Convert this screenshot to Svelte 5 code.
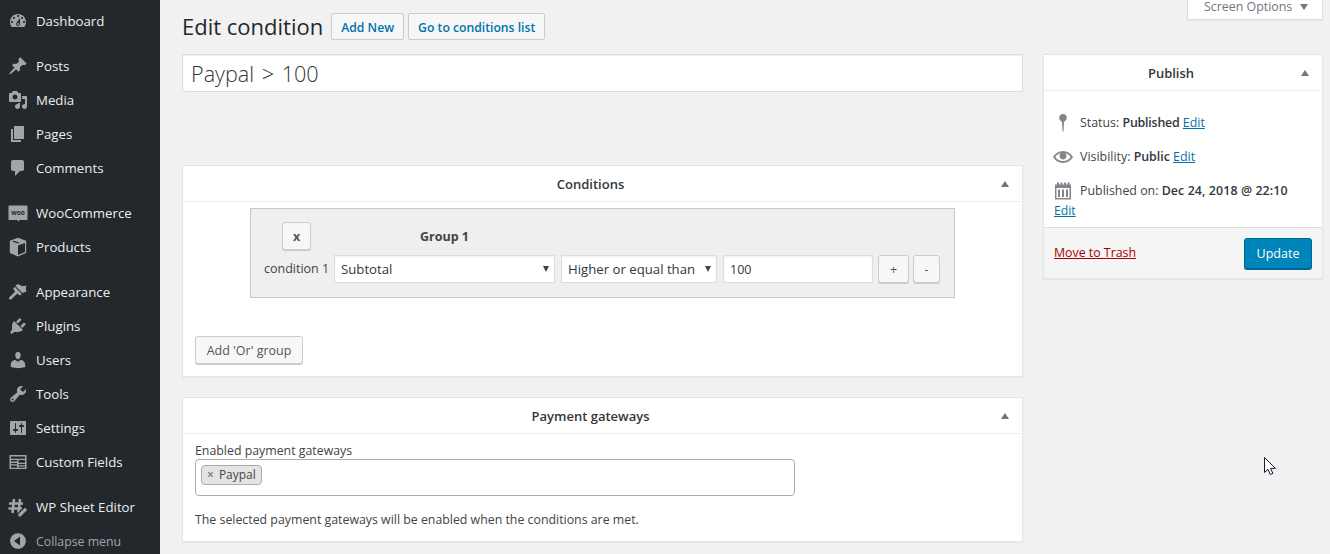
<script>
  const menu = [
    { group: [{ id: 'dashboard', label: 'Dashboard' }] },
    { group: [{ id: 'post', label: 'Posts' }, { id: 'media', label: 'Media' }, { id: 'page', label: 'Pages' }, { id: 'comments', label: 'Comments' }] },
    { group: [{ id: 'woo', label: 'WooCommerce' }, { id: 'products', label: 'Products' }] },
    { group: [{ id: 'appearance', label: 'Appearance' }, { id: 'plugins', label: 'Plugins' }, { id: 'users', label: 'Users' }, { id: 'tools', label: 'Tools' }, { id: 'settings', label: 'Settings' }, { id: 'fields', label: 'Custom Fields' }] },
    { group: [{ id: 'sheet', label: 'WP Sheet Editor' }, { id: 'collapse', label: 'Collapse menu' }] }
  ];
  const paths = {
    dashboard: 'M3.76 16h12.48c1.1-1.37 1.76-3.11 1.76-5 0-4.42-3.58-8-8-8s-8 3.58-8 8c0 1.89.66 3.63 1.76 5zM10 4c.55 0 1 .45 1 1s-.45 1-1 1-1-.45-1-1 .45-1 1-1zM6 6c.55 0 1 .45 1 1s-.45 1-1 1-1-.45-1-1 .45-1 1-1zm8 0c.55 0 1 .45 1 1s-.45 1-1 1-1-.45-1-1 .45-1 1-1zm-5.37 5.55L12 7v6c0 1.1-.9 2-2 2s-2-.9-2-2c0-.57.24-1.08.63-1.45zM4 10c.55 0 1 .45 1 1s-.45 1-1 1-1-.45-1-1 .45-1 1-1zm12 0c.55 0 1 .45 1 1s-.45 1-1 1-1-.45-1-1 .45-1 1-1zm-5 3c0-.55-.45-1-1-1s-1 .45-1 1 .45 1 1 1 1-.45 1-1z',
    post: 'M10.44 3.02l1.82-1.82 6.36 6.35-1.83 1.82c-1.05-.68-2.48-.57-3.41.36l-.75.75c-.92.93-1.04 2.35-.35 3.41l-1.83 1.82-2.41-2.41-2.8 2.79c-.42.42-3.38 2.71-3.8 2.29s1.86-3.39 2.28-3.81l2.79-2.79L4.1 9.36l1.83-1.82c1.05.69 2.48.57 3.4-.36l.75-.75c.93-.92 1.05-2.35.36-3.41z',
    media: 'M13 11V4c0-.55-.45-1-1-1h-1.67L9 1H5L3.67 3H2c-.55 0-1 .45-1 1v7c0 .55.45 1 1 1h10c.55 0 1-.45 1-1zM7 4.5c1.38 0 2.5 1.12 2.5 2.5S8.38 9.5 7 9.5 4.5 8.38 4.5 7 5.62 4.5 7 4.5zM14 6h5v10.5c0 1.38-1.12 2.5-2.5 2.5S14 17.88 14 16.5s1.12-2.5 2.5-2.5c.17 0 .34.02.5.05V9h-3V6zm-4 8.05V13h2v3.5c0 1.38-1.12 2.5-2.5 2.5S7 17.88 7 16.5 8.12 14 9.5 14c.17 0 .34.02.5.05z',
    page: 'M6 15V2h10v13H6zm-1 1h8v2H3V5h2v11z',
    comments: 'M5 2h9c1.1 0 2 .9 2 2v7c0 1.1-.9 2-2 2h-2l-5 5v-5H5c-1.1 0-2-.9-2-2V4c0-1.1.9-2 2-2z',
    products: 'M10 .8l8.200 3v12.200L10 19.400 1.800 16V3.800L10 .8zM10 8.600V18l7-2.900V6.100l-7 2.500zM4.200 4.400l5.800 2.200 1.900-.7L6 3.700 4.200 4.400z',
    appearance: 'M14.480 11.060L7.410 3.990l1.500-1.500c.5-.56 2.300-.47 3.590.82 1 1 1.800.9 2.700.8.900-.1 1.800-.3 3.300-.6-.3 1.500-.5 2.400-.6 3.300-.1.9-.2 1.700.8 2.700-.500.2-1 .4-1.500.5zM6.700 4.700l7.100 7.100-1.400 1.400c-.4.400-1.400 0-2.100-.7l-1-1-5.600 5.600c-.8.8-1.600.9-2.300.2s-.6-1.500.2-2.300l5.600-5.600-1-1c-.7-.7-1.100-1.700-.7-2.100z',
    plugins: 'M13.11 4.36L9.87 7.6 8 5.73l3.24-3.24c.35-.34 1.05-.2 1.56.32.52.51.66 1.21.31 1.55zm-8 1.77l.91-1.12 9.01 9.01-1.19.84c-.71.71-2.63 1.16-3.82 1.16H6.14L4.9 17.26c-.59.59-1.54.59-2.12 0-.59-.58-.59-1.53 0-2.12l1.24-1.24v-3.88c0-1.13.4-3.19 1.09-3.89zm7.26 3.97l3.24-3.24c.34-.35 1.04-.21 1.55.31.52.51.66 1.21.31 1.55l-3.24 3.25z',
    users: 'M10 9.25c-2.27 0-2.73-3.44-2.73-3.44C7 4.02 7.82 2 9.97 2c2.16 0 2.98 2.02 2.71 3.81 0 0-.41 3.44-2.68 3.44zm0 2.57L12.72 10c2.39 0 4.52 2.33 4.52 4.53v2.49s-3.65 1.13-7.24 1.13c-3.65 0-7.24-1.13-7.24-1.13v-2.49c0-2.25 1.94-4.48 4.44-4.48z',
    tools: 'M16.68 9.77c-1.34 1.34-3.3 1.67-4.95.99l-5.41 6.52c-.99.99-2.59.99-3.58 0s-.99-2.59 0-3.57l6.52-5.42c-.68-1.65-.35-3.61.99-4.95 1.28-1.28 3.12-1.62 4.72-1.06l-2.89 2.89 2.82 2.82 2.86-2.87c.53 1.58.18 3.4-1.08 4.67zM3.81 16.21c.4.39 1.04.39 1.43 0 .4-.4.4-1.04 0-1.44-.39-.39-1.03-.39-1.43 0-.39.4-.39 1.04 0 1.44z',
    settings: 'M18 16V4c0-.55-.45-1-1-1H3c-.55 0-1 .45-1 1v12c0 .55.45 1 1 1h14c.55 0 1-.45 1-1zM8 11h1c.55 0 1 .45 1 1s-.45 1-1 1H8v1.5c0 .28-.22.5-.5.5s-.5-.22-.5-.5V13H6c-.55 0-1-.45-1-1s.45-1 1-1h1V5.5c0-.28.22-.5.5-.5s.5.22.5.5V11zm5-2h-1c-.55 0-1-.45-1-1s.45-1 1-1h1V5.5c0-.28.22-.5.5-.5s.5.22.5.5V7h1c.55 0 1 .45 1 1s-.45 1-1 1h-1v5.5c0 .28-.22.5-.5.5s-.5-.22-.5-.5V9z',
    fields: 'M1.500 3h17v14h-17V3zm1.500 1.500v2.200h14V4.500H3zM3 8v1.600h6V8H3zm0 2.900v1.300h6v-1.300H3zm0 2.600v2.200h6v-2.200H3zM10.500 8v2.700H17V8h-6.500zm0 4v1.300H17V12h-6.500zm0 2.500v1.200H17v-1.200h-6.500z',
    collapse: 'M10 2.160c4.33 0 7.84 3.51 7.84 7.84s-3.51 7.84-7.84 7.84S2.160 14.33 2.160 10 5.670 2.160 10 2.160zM12 14.500v-9L6 10l6 4.500z'
  };
</script>

<div class="app">
  <nav class="side">
    {#each menu as m}
      <ul class="group">
        {#each m.group as item}
          <li class="item" class:dim={item.id === 'collapse'}>
            <span class="ico">
              {#if item.id === 'woo'}
                <svg viewBox="0 0 20 20" width="20" height="20"><path fill="#a0a5aa" d="M1.500 2.500h17c.6 0 1 .4 1 1V16c0 .6-.4 1-1 1h-7l-1 1.800-1.200-1.800H1.500c-.6 0-1-.4-1-1V3.500c0-.6.4-1 1-1z"/><text x="10" y="12" text-anchor="middle" class="wootext">woo</text></svg>
              {:else if item.id === 'sheet'}
                <svg viewBox="0 0 20 20" width="20" height="20">
                  <path fill="none" stroke="#a0a5aa" stroke-width="2.6" d="M6 2L4.500 16M12 2l-1.500 14M1 6.500h14M.5 11.500H14"/>
                  <path fill="#a0a5aa" stroke="#23282d" stroke-width="1.2" d="M17 9.800l3 3-7 7.200H9.800v-3.200z"/>
                </svg>
              {:else}
                <svg viewBox="0 0 20 20" width="20" height="20"><path fill="#a0a5aa" fill-rule="evenodd" d={paths[item.id]}/></svg>
              {/if}
            </span>
            <span class="lbl">{item.label}</span>
          </li>
        {/each}
      </ul>
    {/each}
  </nav>

  <main class="main">
    <header class="top">
      <h1>Edit condition</h1>
      <a class="head-btn add">Add New</a>
      <a class="head-btn">Go to conditions list</a>
      <div class="screen">Screen Options <i class="tri down"></i></div>
    </header>

    <div class="cols">
      <div class="left">
        <input class="title" value="Paypal > 100" />

        <section class="box cond">
          <div class="box-h"><h2>Conditions</h2><i class="tri up"></i></div>
          <div class="cond-body">
            <div class="groupbox">
              <div class="g-top">
                <button class="btn x">x</button>
                <strong>Group 1</strong>
              </div>
              <div class="g-row">
                <span class="c-lbl">condition 1</span>
                <div class="sel s1"><select><option>Subtotal</option></select></div>
                <div class="sel s2"><select><option>Higher or equal than</option></select></div>
                <input class="num" value="100" />
                <button class="btn plus">+</button>
                <button class="btn minus">-</button>
              </div>
            </div>
            <button class="btn orbtn">Add 'Or' group</button>
          </div>
        </section>

        <section class="box pay">
          <div class="box-h"><h2>Payment gateways</h2><i class="tri up"></i></div>
          <div class="pay-body">
            <div class="pay-lbl">Enabled payment gateways</div>
            <div class="multi"><span class="chip"><span class="chip-x">×</span>Paypal</span></div>
            <p>The selected payment gateways will be enabled when the conditions are met.</p>
          </div>
        </section>
      </div>

      <aside class="box pub">
        <div class="box-h"><h2>Publish</h2><i class="tri up"></i></div>
        <div class="pub-body">
          <div class="pub-row">
            <svg class="pico" viewBox="0 0 20 20" width="20" height="20"><path fill="#82878c" d="M10 1c2.200 0 3.800 1.700 3.800 3.800 0 2-1.500 3.500-2.800 3.900l-.5 9.800h-1L9 8.700C7.700 8.300 6.200 6.800 6.200 4.800 6.200 2.700 7.800 1 10 1z"/></svg>
            <span>Status: <b class="tight">Published</b> <a>Edit</a></span>
          </div>
          <div class="pub-row">
            <svg class="pico" viewBox="0 0 20 20" width="20" height="20"><path fill="#82878c" d="M19.700 9.400C17.700 6 14 3.900 10 3.900S2.300 6 .3 9.400L0 10l.3.6c2 3.400 5.700 5.500 9.700 5.500s7.700-2.100 9.700-5.500l.3-.6-.3-.6zM10 14.100c-3.100 0-6-1.600-7.700-4.100C3.600 8 5.700 6.600 8 6.100c-.9.600-1.500 1.700-1.500 2.900 0 1.900 1.600 3.500 3.500 3.500s3.500-1.600 3.500-3.500c0-1.200-.6-2.300-1.500-2.900 2.300.5 4.400 1.900 5.700 3.900-1.700 2.500-4.600 4.100-7.700 4.100z"/></svg>
            <span>Visibility: <b>Public</b> <a>Edit</a></span>
          </div>
          <div class="pub-row">
            <svg class="pico" viewBox="0 0 20 20" width="20" height="20"><path fill="#82878c" fill-rule="evenodd" d="M4 1.500h2v2h1.500v-2h2v2H11v-2h2v2h1.500v-2h2v2H18V18.500H2V3.500h2v-2zM3.500 7v10h13V7h-13zM5 8.500h2V16H5V8.500zm4 0h2V16H9V8.500zm4 0h2V16h-2V8.500z"/></svg>
            <span>Published on: <b class="wide">Dec 24, 2018 @ 22:10</b></span>
          </div>
          <a class="edit-date">Edit</a>
        </div>
        <div class="pub-foot">
          <a class="trash">Move to Trash</a>
          <button class="update">Update</button>
        </div>
      </aside>
    </div>
  </main>

  <svg class="cursor" viewBox="0 0 13 20" width="13" height="20"><path fill="#fff" stroke="#1a1a2e" stroke-width="1" d="M.5.500v15l3.500-3.200 2.300 5.200 2.600-1.100-2.300-5h4.800z"/></svg>
</div>

<style>
  :global(body) { margin: 0; background: #f1f1f1; }
  * { box-sizing: border-box; }
  .app { position: relative; display: flex; height: 554px; overflow: hidden; background: #f1f1f1; font: 12.35px/18px "Open Sans", sans-serif; color: #444; }
  .side { width: 160px; flex: none; background: #23282d; padding-top: 4px; }
  .group { list-style: none; margin: 0 0 11px; padding: 0; }
  .item { display: flex; align-items: center; height: 34px; padding-left: 8px; gap: 8px; color: #eee; font-size: 13.25px; }
  .item.dim { color: #a0a5aa; font-size: 12.3px; }
  .item.dim .lbl { padding-top: 2px; }
  .ico { display: flex; width: 20px; height: 20px; }
  .wootext { font: 700 6.5px "Open Sans", sans-serif; fill: #23282d; }

  .main { flex: 1; padding: 0 7px 0 22px; min-width: 0; }
  .top { display: flex; align-items: flex-start; height: 54px; }
  h1 { margin: 13px 8px 0 0; font-size: 22px; font-weight: 400; line-height: 27px; color: #23282d; }
  .head-btn { display: block; height: 27px; margin: 13px 4px 0 0; padding: 0 9px; border: 1px solid #ccc; border-radius: 2px; background: #f7f7f7; color: #0073aa; font-weight: 600; font-size: 12.2px; line-height: 27px; text-decoration: none; }
  .screen { margin-left: auto; width: 136px; height: 20px; padding: 0 0 6px 16px; background: #fff; border: 1px solid #ddd; border-top: 0; box-shadow: 0 1px 1px rgba(0,0,0,.04); color: #72777c; font-size: 12.4px; line-height: 13px; display: flex; align-items: center; gap: 8px; }
  .tri { display: block; width: 0; height: 0; border-left: 4.5px solid transparent; border-right: 4.5px solid transparent; }
  .tri.down { border-top: 6px solid #72777c; }
  .tri.up { border-bottom: 6px solid #72777c; position: absolute; right: 13px; top: 15px; }

  .cols { display: flex; gap: 20px; align-items: flex-start; }
  .left { width: 841px; flex: none; }
  .title { display: block; width: 100%; height: 38px; padding: 3px 8px; border: 1px solid #ddd; background: #fff; box-shadow: inset 0 1px 2px rgba(0,0,0,.07); color: #32373c; font: 300 21.6px "Open Sans", sans-serif; word-spacing: 2px; outline: 0; }
  .box { position: relative; background: #fff; border: 1px solid #e5e5e5; box-shadow: 0 1px 1px rgba(0,0,0,.04); }
  .box-h { height: 36px; border-bottom: 1px solid #eee; padding-right: 24px; display: flex; align-items: center; justify-content: center; }
  h2 { margin: 0; font-size: 13px; font-weight: 600; color: #32373c; }
  .cond { margin-top: 73px; height: 212px; }
  .cond-body { padding: 6px 12px 0; }
  .groupbox { width: 705px; height: 90px; margin: 0 auto 38px; background: #efefef; border: 1px solid #c8c8c8; padding: 13px 14px 0 13px; }
  .g-top { display: flex; align-items: center; height: 28px; margin-bottom: 5px; padding-left: 18px; }
  .g-top strong { margin: 2px 0 0 109px; font-weight: 700; font-size: 12.5px; color: #444; }
  .g-row { display: flex; align-items: center; gap: 5px; }
  .c-lbl { width: 65px; white-space: nowrap; font-size: 12.5px; flex: none; }
  .btn { height: 28px; padding: 0 10px; font: 12.5px "Open Sans", sans-serif; color: #555; background: #f7f7f7; border: 1px solid #ccc; border-radius: 3px; box-shadow: 0 1px 0 #ccc; }
  .x { width: 29px; padding: 0; font-weight: 700; }
  .plus { width: 31px; padding: 0; }
  .minus { width: 27px; padding: 0; margin-left: -1px; }
  .orbtn { width: 108px; padding: 0; display: block; }
  .sel { position: relative; height: 28px; flex: none; }
  .sel::after { content: ""; position: absolute; right: 6px; top: 11px; border-left: 3.5px solid transparent; border-right: 3.5px solid transparent; border-top: 6px solid #444; }
  .s1 { width: 221px; }
  .s2 { width: 156px; margin: 0 1px; }
  select, .num { width: 100%; height: 28px; padding: 0 6px; border: 1px solid #ddd; border-radius: 0; background: #fff; color: #32373c; font: 13.2px "Open Sans", sans-serif; appearance: none; box-shadow: inset 0 1px 2px rgba(0,0,0,.07); outline: 0; }
  .num { width: 150px; flex: none; font-size: 12.5px; }
  .pay { margin-top: 20px; height: 145px; }
  .pay-body { padding: 8px 12px 0; }
  .pay-lbl { line-height: 17px; }
  .multi { width: 600px; height: 37px; padding: 5px 5px; border: 1px solid #aaa; border-radius: 4px; background: #fff; }
  .chip { display: inline-block; height: 20px; padding: 0 5px; border: 1px solid #aaa; border-radius: 4px; background: #e4e4e4; line-height: 18px; font-size: 12px; }
  .chip-x { color: #888; font-weight: 700; margin-right: 5px; }
  .pay-body p { margin: 15px 0 0; }

  .pub { width: 280px; flex: none; height: 225px; }
  .pub-body { padding: 15px 10px 0 10px; height: 136px; }
  .pub-row { display: flex; align-items: center; height: 34px; gap: 7px; white-space: nowrap; font-size: 12.4px; }
  .pico { flex: none; margin-left: -1px; }
  b { font-weight: 600; color: #32373c; }
  b.tight { letter-spacing: -.2px; }
  b.wide { letter-spacing: .1px; }
  a { color: #0073aa; text-decoration: underline; cursor: pointer; }
  .head-btn { text-decoration: none; }
  .edit-date { display: block; line-height: 12px; margin-top: -3px; font-size: 12.2px; }
  .pub-foot { height: 51px; display: flex; justify-content: space-between; align-items: center; padding: 0 10px; background: #f5f5f5; border-top: 1px solid #ddd; }
  .trash { color: #a00; }
  .update { width: 68px; height: 31px; padding: 0; border: 1px solid #006799; border-radius: 3px; background: #0085ba; color: #fff; font: 12.5px "Open Sans", sans-serif; box-shadow: 0 1px 0 #006799; }
  .cursor { position: absolute; left: 1264px; top: 457px; }
</style>
